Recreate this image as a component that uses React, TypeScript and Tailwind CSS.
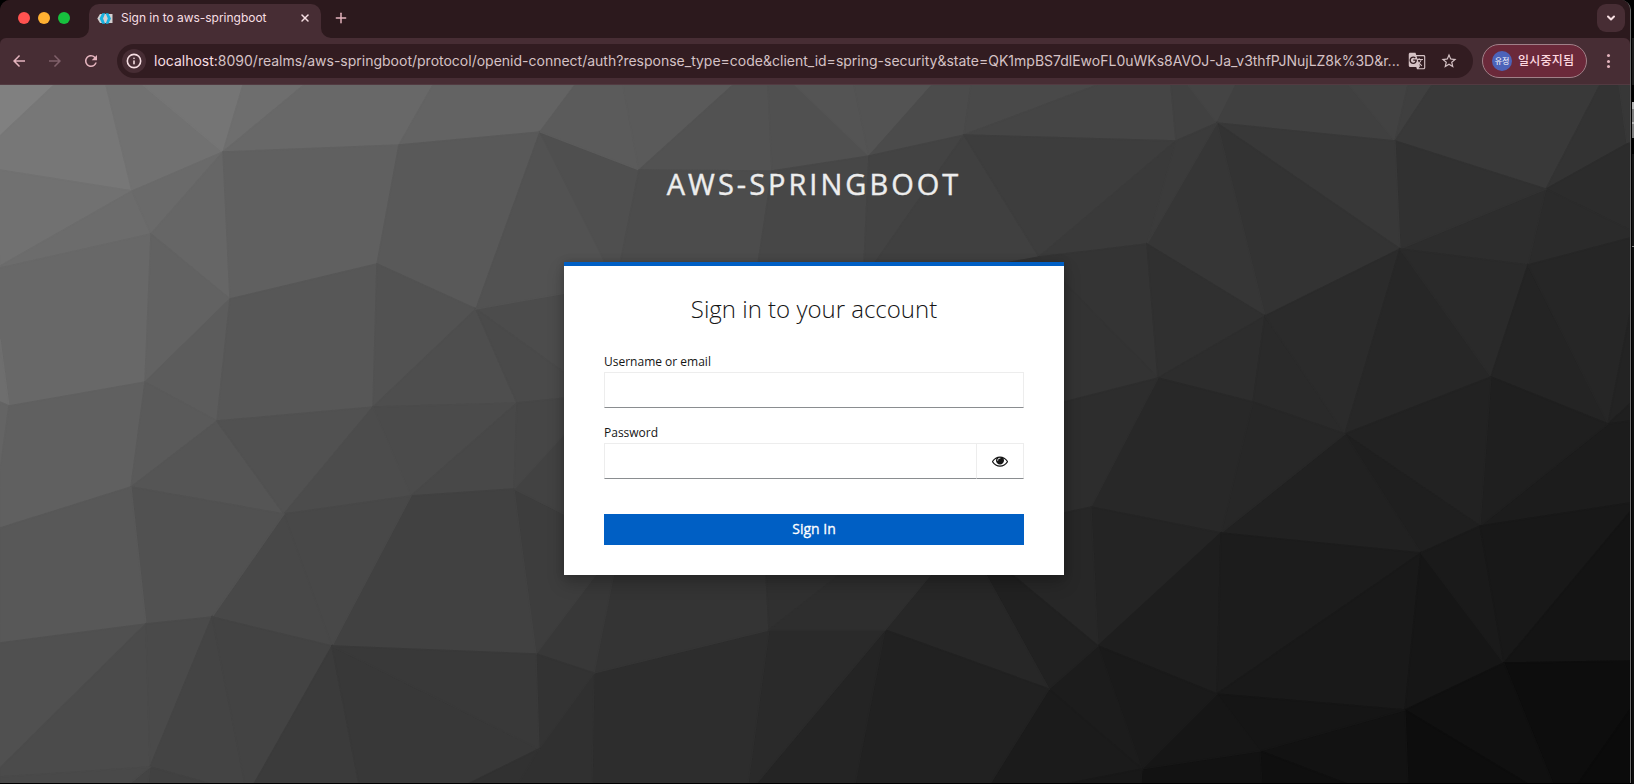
import React from "react";
import { ChevronDown, Info, Plus, X } from "lucide-react";
import {
  MdArrowBack,
  MdArrowForward,
  MdGTranslate,
  MdRefresh,
  MdStarBorder,
} from "react-icons/md";

// [grey, polygon points] in window coordinates
const facets: [string, string][] = [
  ["#808080", "0,85 54,85 0,136"],
  ["#777777", "54,85 106,85 132,191 0,170 0,136"],
  ["#717171", "0,170 132,191 0,266"],
  ["#6c6c6c", "0,266 132,191 151,234 0,268"],
  ["#717171", "106,85 143,85 223,152 132,191"],
  ["#757575", "143,85 243,85 223,152"],
  ["#6e6e6e", "243,85 304,85 223,152"],
  ["#686868", "304,85 433,85 399,145 223,152"],
  ["#636363", "433,85 575,85 540,132 399,145"],
  ["#6a6a6a", "223,152 132,191 151,234"],
  ["#666666", "223,152 151,234 230,299"],
  ["#606060", "223,152 399,145 377,264 230,299"],
  ["#595959", "399,145 540,132 476,309 377,264"],
  ["#686868", "0,268 151,234 145,382 9,406 0,339"],
  ["#6e6e6e", "0,339 9,406 0,402"],
  ["#646464", "9,406 0,402 0,471"],
  ["#626262", "151,234 230,299 145,382"],
  ["#5c5c5c", "230,299 145,382 217,421"],
  ["#575757", "230,299 377,264 373,407 217,421"],
  ["#525252", "377,264 476,309 373,407"],
  ["#606060", "9,406 145,382 131,487 0,528 0,471"],
  ["#5a5a5a", "145,382 217,421 131,487"],
  ["#555555", "217,421 131,487 284,514"],
  ["#515151", "217,421 373,407 284,514"],
  ["#4e4e4e", "476,309 373,407 517,403"],
  ["#4b4b4b", "373,407 517,403 411,496"],
  ["#4c4c4c", "373,407 411,496 284,514"],
  ["#484848", "517,403 411,496 514,489"],
  ["#4c4c4c", "476,309 566,293 566,374"],
  ["#4a4a4a", "476,309 566,374 566,398 517,403"],
  ["#525252", "540,132 476,309 566,293 606,264 597,244"],
  ["#4f4f4f", "540,132 639,170 620,264 606,264"],
  ["#5b5b5b", "540,132 575,85 623,85 639,170"],
  ["#5a5a5a", "623,85 733,85 639,170"],
  ["#525252", "733,85 768,85 772,171 639,170"],
  ["#505050", "768,85 795,85 869,156 772,171"],
  ["#545454", "795,85 854,85 869,156"],
  ["#535353", "854,85 932,85 869,156"],
  ["#4b4b4b", "932,85 971,85 964,135 869,156"],
  ["#494949", "971,85 1097,85 964,135"],
  ["#454545", "964,135 1097,85 1171,85 1176,141"],
  ["#4c4c4c", "639,170 772,171 758,264 620,264"],
  ["#474747", "772,171 869,156 864,264 758,264"],
  ["#434343", "869,156 964,135 874,264 864,264"],
  ["#404040", "964,135 1039,257 1000,264 874,264"],
  ["#3d3d3d", "964,135 1176,141 1039,257"],
  ["#3a3a3a", "1176,141 1039,257 1147,244"],
  ["#414141", "1176,141 1171,85 1188,85 1217,123"],
  ["#444444", "1188,85 1236,85 1217,123"],
  ["#404040", "1236,85 1349,85 1395,141 1217,123"],
  ["#424242", "1349,85 1408,85 1395,141"],
  ["#3f3f3f", "1408,85 1432,85 1395,141"],
  ["#393939", "1432,85 1600,85 1546,189 1395,141"],
  ["#333333", "1600,85 1619,85 1627,144 1546,189"],
  ["#373737", "1619,85 1630,85 1630,143 1627,144"],
  ["#2c2c2c", "1546,189 1627,144 1630,143 1630,230"],
  ["#2b2b2b", "1546,189 1630,230 1630,238 1528,265"],
  ["#2d2d2d", "1546,189 1400,249 1528,265"],
  ["#313131", "1395,141 1546,189 1400,249"],
  ["#383838", "1217,123 1395,141 1400,249"],
  ["#333333", "1217,123 1400,249 1265,316"],
  ["#363636", "1217,123 1265,316 1147,244"],
  ["#3b3b3b", "1176,141 1217,123 1147,244"],
  ["#343434", "1147,244 1039,257 1158,378"],
  ["#303030", "1147,244 1265,316 1158,378"],
  ["#333333", "1000,264 1039,257 1158,378 1060,403"],
  ["#2d2d2d", "1265,316 1158,378 1253,402"],
  ["#2a2a2a", "1265,316 1253,402 1345,434"],
  ["#2b2b2b", "1265,316 1345,434 1400,249"],
  ["#272727", "1400,249 1345,434 1491,377"],
  ["#2a2a2a", "1400,249 1491,377 1528,265"],
  ["#242424", "1528,265 1491,377 1608,424"],
  ["#262626", "1528,265 1608,424 1630,314 1630,238"],
  ["#232323", "1608,424 1630,314 1630,404"],
  ["#1f1f1f", "1608,424 1630,404 1630,421"],
  ["#1c1c1c", "1608,424 1630,421 1630,503 1480,526"],
  ["#1f1f1f", "1608,424 1480,526 1491,377"],
  ["#222222", "1491,377 1480,526 1345,434"],
  ["#1f1f1f", "1345,434 1480,526 1421,553"],
  ["#212121", "1345,434 1421,553 1221,533"],
  ["#272727", "1345,434 1221,533 1253,402"],
  ["#282828", "1158,378 1253,402 1221,533 1091,507"],
  ["#2d2d2d", "1158,378 1091,507 1060,514 1060,403"],
  ["#242424", "1091,507 1098,646 1221,533"],
  ["#272727", "1091,507 1098,646 1010,573 1060,514"],
  ["#1e1e1e", "1098,646 1221,533 1217,694"],
  ["#1c1c1c", "1221,533 1421,553 1217,694"],
  ["#191919", "1421,553 1217,694 1405,710"],
  ["#161616", "1421,553 1405,710 1504,663"],
  ["#1a1a1a", "1421,553 1480,526 1504,663"],
  ["#181818", "1480,526 1504,663 1630,512 1630,503"],
  ["#141414", "1504,663 1630,512 1630,661"],
  ["#0d0d0d", "1504,663 1630,661 1630,710 1578,784 1553,784"],
  ["#0b0b0b", "1630,710 1630,784 1578,784"],
  ["#101010", "1504,663 1405,710 1528,784 1553,784"],
  ["#0d0d0d", "1405,710 1408,784 1528,784"],
  ["#121212", "1405,710 1260,751 1347,784 1408,784"],
  ["#151515", "1405,710 1217,694 1260,751"],
  ["#0f0f0f", "1260,751 1262,784 1347,784"],
  ["#121212", "1142,769 1260,751 1262,784 1141,784"],
  ["#161616", "1217,694 1142,769 1260,751"],
  ["#1a1a1a", "1098,646 1217,694 1142,769"],
  ["#1c1c1c", "1098,646 1049,689 1142,769"],
  ["#1b1b1b", "1049,689 1142,769 1066,784 990,784"],
  ["#181818", "1142,769 1141,784 1066,784"],
  ["#212121", "1049,689 1098,646 1010,573 985,573"],
  ["#272727", "885,630 1049,689 985,573 932,573"],
  ["#212121", "885,630 1049,689 990,784 855,784"],
  ["#242424", "885,630 855,784 756,784"],
  ["#2a2a2a", "769,630 885,630 756,784 748,784"],
  ["#2d2d2d", "594,673 769,630 748,784 592,784"],
  ["#303030", "594,673 592,784 518,784 539,749"],
  ["#343434", "594,673 769,630 766,573 614,573"],
  ["#303030", "769,630 766,573 842,573"],
  ["#2e2e2e", "769,630 885,630 932,573 842,573"],
  ["#383838", "594,673 614,573 597,573 536,654"],
  ["#333333", "536,654 594,673 539,749"],
  ["#3d3d3d", "536,654 514,489 566,515 597,573"],
  ["#424242", "514,489 566,432 566,515"],
  ["#464646", "517,403 514,489 566,432 566,398"],
  ["#414141", "332,646 411,496 514,489 536,654"],
  ["#484848", "284,514 411,496 332,646"],
  ["#484848", "284,514 212,617 332,646"],
  ["#515151", "131,487 284,514 212,617 146,624"],
  ["#585858", "131,487 146,624 0,643 0,528"],
  ["#505050", "0,643 146,624 0,768"],
  ["#4b4b4b", "146,624 150,767 0,777 0,768"],
  ["#4a4a4a", "146,624 212,617 150,767"],
  ["#444444", "212,617 150,767 211,784 245,784"],
  ["#414141", "150,767 211,784 148,784"],
  ["#444444", "150,767 148,784 129,784"],
  ["#494949", "150,767 129,784 0,784 0,777"],
  ["#434343", "212,617 332,646 254,784 245,784"],
  ["#3b3b3b", "332,646 254,784 359,784"],
  ["#383838", "332,646 359,784 468,784 539,749"],
  ["#393939", "332,646 539,749 536,654"],
  ["#313131", "539,749 468,784 518,784"],
];

function Keycloak() {
  return (
    <svg className="h-[11px] w-4 shrink-0" viewBox="0 0 16 11">
      <path d="M3 1h12.5v9H3L.3 5.5z" fill="#d3cfd0" />
      <path d="M5.2.3h3L6 5.5l2.200 5.200h-3L2.600 5.500z" fill="#16b1e0" />
      <path d="M8.600.3h2.800L14 5.500l-2.600 5.200H8.600l2.200-5.200z" fill="#16b1e0" />
    </svg>
  );
}

function Eye() {
  return (
    <svg className="size-4 text-[#151515]" viewBox="0 0 1792 1792" fill="currentColor">
      <path d="M1664 960q-152-236-381-353 61 104 61 225 0 185-131.500 316.500t-316.500 131.500-316.500-131.500-131.500-316.500q0-121 61-225-229 117-381 353 133 205 333.500 326.500t434.500 121.500 434.500-121.500 333.500-326.500zM944 576q0-20-14-34t-34-14q-125 0-214.500 89.500t-89.500 214.500q0 20 14 34t34 14 34-14 14-34q0-86 61-147t147-61q20 0 34-14t14-34zM1792 960q0 34-20 69-140 230-376.500 368.500t-499.500 138.500-499.500-139-376.500-368q-20-35-20-69t20-69q140-229 376.500-368t499.500-139 499.500 139 376.500 368q20 35 20 69z" />
    </svg>
  );
}

function TabStrip() {
  return (
    <div className="flex h-[38px] items-end bg-[#2c191d]">
      <div className="flex h-full w-[89px] items-center gap-2 pb-0.5 pl-[18px]">
        <span className="size-3 rounded-full bg-[#ff5250]" />
        <span className="size-3 rounded-full bg-[#ffb032]" />
        <span className="size-3 rounded-full bg-[#17c03e]" />
      </div>
      <div className="relative flex h-[34px] w-[232px] items-center rounded-t-[10px] bg-[#472d34] pb-1.5 pl-2">
        <svg className="absolute bottom-0 -left-2.5 size-2.5" viewBox="0 0 10 10">
          <path d="M10 0v10H0A10 10 0 0 0 10 0" fill="#472d34" />
        </svg>
        <svg className="absolute -right-2.5 bottom-0 size-2.5" viewBox="0 0 10 10">
          <path d="M0 0v10h10A10 10 0 0 1 0 0" fill="#472d34" />
        </svg>
        <Keycloak />
        <span className="ml-2 w-[178px] text-[12px] tracking-[-0.02px] whitespace-nowrap text-[#f7dfe3]">
          Sign in to aws-springboot
        </span>
        <X className="size-3 text-[#f7dfe3]" strokeWidth={3} />
      </div>
      <Plus className="mb-3 ml-3 size-4 text-[#e5b4be]" strokeWidth={2.2} />
      <div className="mr-[5px] mb-1.5 ml-auto flex size-7 items-center justify-center rounded-[9px] bg-[#472d34]">
        <ChevronDown className="size-3 text-[#f7dfe3]" strokeWidth={4} />
      </div>
    </div>
  );
}

function Toolbar() {
  return (
    <div className="flex h-[47px] items-center rounded-t-md border-b border-[#523a41] bg-[#472d34] pr-[17px] pl-2.5">
      <MdArrowBack className="size-[18px] text-[#e5b4be]" />
      <MdArrowForward className="ml-[18px] size-[18px] text-[#80606a]" />
      <MdRefresh className="ml-[18px] size-[18px] text-[#e5b4be]" />
      <div className="ml-[17px] flex h-[34px] w-[1356px] items-center rounded-full bg-[#321c21] pl-[5px]">
        <span className="flex size-6 items-center justify-center rounded-full bg-[#472d34]">
          <Info className="size-4 text-[#f7dfe3]" strokeWidth={2.4} />
        </span>
        <span className="ml-2 w-[1247px] pb-px text-[14px] whitespace-nowrap text-[#d5c2c5]">
          <span className="text-[#f7dfe3]">localhost:</span>
          8090/realms/aws-springboot/protocol/openid-connect/auth?response_type=code&amp;client_id=spring-security&amp;state=QK1mpBS7dlEwoFL0uWKs8AVOJ-Ja_v3thfPJNujLZ8k%3D&amp;r...
        </span>
        <MdGTranslate className="ml-[7px] size-[18px] text-[#d5c2c5]" />
        <MdStarBorder className="ml-3.5 size-[18px] text-[#d5c2c5]" />
      </div>
      <div className="ml-[9px] flex h-[34px] w-[105px] items-center rounded-full border border-[#a08088] bg-[#6b293a] pl-[9px]">
        <span className="flex size-5 items-center justify-center rounded-full bg-[#4c63b9] text-[8px] text-white">
          유정
        </span>
        <span className="ml-1.5 text-[12px] font-medium tracking-[0.2px] whitespace-nowrap text-[#ffd9e0]">
          일시중지됨
        </span>
      </div>
      <div className="ml-auto flex flex-col gap-[2.4px] pr-[3px]">
        <span className="size-[3px] rounded-full bg-[#e5b4be]" />
        <span className="size-[3px] rounded-full bg-[#e5b4be]" />
        <span className="size-[3px] rounded-full bg-[#e5b4be]" />
      </div>
    </div>
  );
}

function LoginCard() {
  return (
    <form className="w-[500px] border-t-4 border-[#005fc4] bg-white px-10 pb-[30px] shadow-[0_8px_16px_0_rgba(3,3,3,0.22),0_0_8px_0_rgba(3,3,3,0.15)]">
      <h1 className="pt-6 text-center text-[24px] leading-[38px] font-light text-[#151515]">
        Sign in to your account
      </h1>
      <label className="mt-6 mb-px block text-[12px] leading-[19px] text-[#151515]">
        Username or email
      </label>
      <input className="block h-9 w-full border border-[#ededed] border-b-[#8a8d90] outline-none" />
      <label className="mt-[15px] mb-px block text-[12px] leading-[19px] text-[#151515]">
        Password
      </label>
      <div className="flex h-9">
        <input
          type="password"
          className="w-[372px] border border-r-0 border-[#ededed] border-b-[#8a8d90] outline-none"
        />
        <button
          type="button"
          className="flex flex-1 items-center justify-center border border-[#ededed] border-b-[#8a8d90]"
        >
          <Eye />
        </button>
      </div>
      <button
        type="button"
        className="mt-[35px] block h-[31px] w-full bg-[#005fc4] pb-0.5 text-[14px] font-medium text-white [-webkit-text-stroke:0.3px_white]"
      >
        Sign In
      </button>
    </form>
  );
}

// Sliver of the window that sits behind the browser
function BackWindow() {
  return (
    <div className="ml-px flex w-0.5 flex-col">
      <div className="mt-[38px] h-[47px] bg-[#1c1c1c]" />
      <div className="mt-[17px] h-[7px] bg-[#b5b5b5]" />
      <div className="h-[13px] bg-[#7d7d7d]" />
      <div className="h-0.5 bg-[#b5b5b5]" />
      <div className="h-3.5 bg-[#7d7d7d]" />
      <div className="mt-4 h-[92px] bg-[#141414]" />
      <div className="h-px bg-[#8a8a8a]" />
      <div className="flex-1 bg-[#0c0c0c]" />
    </div>
  );
}

export default function App() {
  return (
    <div className="flex h-[784px] w-[1634px] overflow-hidden bg-black font-['Inter','Noto_Sans_CJK_KR',sans-serif]">
      <div className="flex h-[783px] w-[1631px] flex-col overflow-hidden rounded-t-[10px] border-r border-[#6a6a6a] bg-[#2c191d]">
        <TabStrip />
        <Toolbar />
        <main className="relative flex-1 bg-[#333] font-['Open_Sans',sans-serif]">
          <svg className="absolute top-0 left-0 h-[699px] w-[1630px]" viewBox="0 85 1630 699">
            {facets.map(([fill, points]) => (
              <polygon key={points} points={points} fill={fill} stroke={fill} strokeWidth={1.4} />
            ))}
          </svg>
          <div className="relative flex flex-col items-center pr-[2px]">
            <header className="mt-[79px] h-[98px] text-[29px] leading-[40px] tracking-[3px] text-[#ededed] uppercase [-webkit-text-stroke:0.4px_#ededed]">
              aws-springboot
            </header>
            <LoginCard />
          </div>
        </main>
      </div>
      <BackWindow />
    </div>
  );
}
